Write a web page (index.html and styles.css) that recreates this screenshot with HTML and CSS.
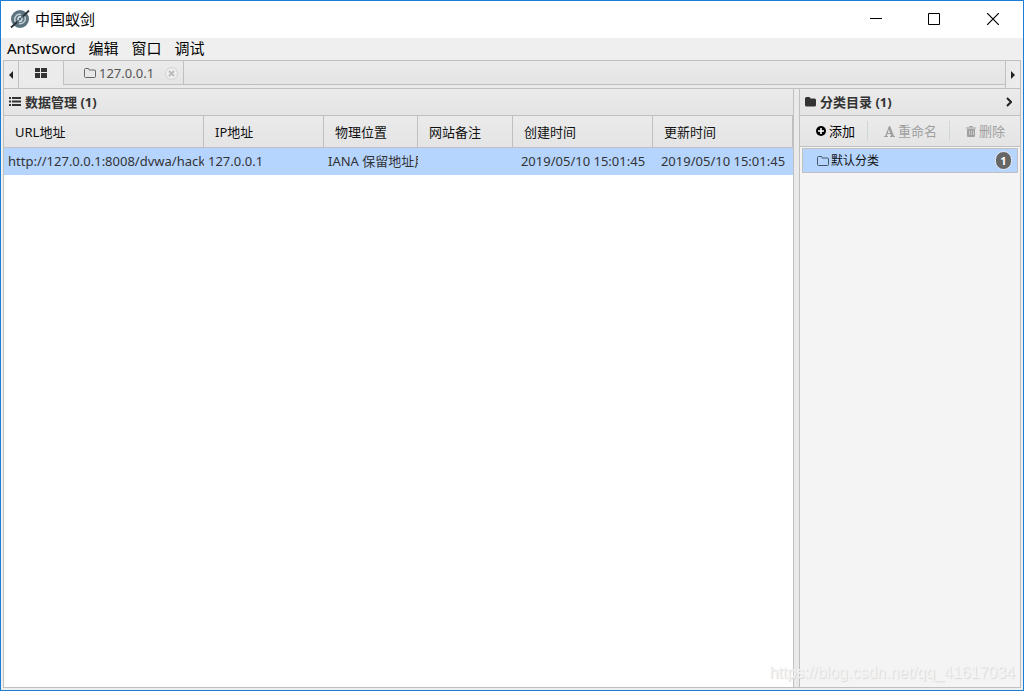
FILE: index.html
```html
<!DOCTYPE html>
<html lang="zh-CN">
<head>
<meta charset="utf-8">
<title>中国蚁剑</title>
<link rel="stylesheet" href="styles.css">
</head>
<body>
<div class="window">
  <header class="titlebar">
    <svg class="logo" width="20" height="20" viewBox="0 0 20 20">
      <circle cx="10" cy="10" r="9" fill="#5d7480"/>
      <path d="M5.500 13A5 5 0 0 1 11 5.500M14.500 7A5 5 0 0 1 9 14.500" fill="none" stroke="#c3d0d6" stroke-width="1.400"/>
      <path d="M8.500 11.500A2.200 2.200 0 0 1 11 8M11.500 8.500A2.200 2.200 0 0 1 9 12" fill="none" stroke="#dbe4e8" stroke-width="1.400"/>
      <path d="M1 18.500L7 13M13 7.500L19 1.500" stroke="#2b3338" stroke-width="1.800"/>
      <path d="M7 13L13 7.500" stroke="#4a5c66"/>
    </svg>
    <h1 class="app-title">中国蚁剑</h1>
    <div class="window-buttons">
      <button class="win-btn" aria-label="最小化"><svg width="12" height="12" viewBox="0 0 12 12"><path d="M0 5.500H12" stroke="#000"/></svg></button>
      <button class="win-btn" aria-label="最大化"><svg width="12" height="12" viewBox="0 0 12 12"><path d="M.5.500H11.500V11.500H.5Z" fill="none" stroke="#000"/></svg></button>
      <button class="win-btn" aria-label="关闭"><svg width="12" height="12" viewBox="0 0 12 12"><path d="M0 0L12 12M12 0L0 12" stroke="#000" stroke-width="1.200"/></svg></button>
    </div>
  </header>
  <nav class="menubar">
    <button class="menu">AntSword</button>
    <button class="menu">编辑</button>
    <button class="menu">窗口</button>
    <button class="menu">调试</button>
  </nav>
  <div class="workspace">
    <div class="tabbar">
      <button class="tab-arrow left" aria-label="向左"><svg width="4" height="8" viewBox="0 0 4 8"><path d="M4 0V8L0 4Z" fill="#222"/></svg></button>
      <div class="tabs">
        <button class="home-tab" aria-label="主页"><svg width="12" height="10" viewBox="0 0 12 10"><path d="M0 0H5V4H0ZM6 0H12V4H6ZM0 5H5V10H0ZM6 5H12V10H6Z" fill="#333"/></svg></button>
        <div class="tab">
          <svg width="12" height="10" viewBox="0 0 12 10"><path d="M.5 1.500Q.5.500 1.500.500H4Q5 .5 5 1.500V2H10.500Q11.500 2 11.500 3V8.500Q11.500 9.500 10.500 9.500H1.500Q.5 9.500 .5 8.500Z" fill="none" stroke="#666"/></svg>
          <span class="tab-name">127.0.0.1</span>
          <button class="tab-close" aria-label="关闭标签"><svg width="13" height="13" viewBox="0 0 13 13"><circle cx="6.500" cy="6.500" r="6" fill="#ededed" stroke="#d2d2d2"/><path d="M4 4L9 9M9 4L4 9" stroke="#bbb" stroke-width="1.800"/></svg></button>
        </div>
      </div>
      <button class="tab-arrow right" aria-label="向右"><svg width="4" height="8" viewBox="0 0 4 8"><path d="M0 0V8L4 4Z" fill="#222"/></svg></button>
    </div>
    <main class="panes">
      <section class="data-pane">
        <h2 class="pane-head">
          <svg width="12" height="9" viewBox="0 0 12 9"><path d="M0 1H2M0 4.500H2M0 8H2M3 1H12M3 4.500H12M3 8H12" stroke="#333" stroke-width="1.800"/></svg>
          <span>数据管理 (1)</span>
        </h2>
        <table class="grid">
          <colgroup><col class="c-url"><col class="c-ip"><col class="c-place"><col class="c-note"><col class="c-time"><col class="c-time"></colgroup>
          <thead><tr><th>URL地址</th><th>IP地址</th><th>物理位置</th><th>网站备注</th><th>创建时间</th><th>更新时间</th></tr></thead>
          <tbody><tr><td>http://127.0.0.1:8008/dvwa/hacka</td><td>127.0.0.1</td><td>IANA 保留地址用</td><td></td><td class="center">2019/05/10 15:01:45</td><td class="center">2019/05/10 15:01:45</td></tr></tbody>
        </table>
      </section>
      <aside class="side-pane">
        <h2 class="pane-head">
          <svg width="11" height="10" viewBox="0 0 11 10"><path d="M0 1.500Q0 0 1.500 0H4Q5.500 0 5.500 1.500H9.500Q11 1.500 11 3V8Q11 9.500 9.500 9.500H1.500Q0 9.500 0 8Z" fill="#333"/></svg>
          <span>分类目录 (1)</span>
          <button class="collapse" aria-label="折叠"><svg width="6" height="10" viewBox="0 0 6 10"><path d="M1 1L5 5L1 9" fill="none" stroke="#222" stroke-width="2"/></svg></button>
        </h2>
        <div class="toolbar">
          <button class="tool"><svg width="10" height="10" viewBox="0 0 10 10"><circle cx="5" cy="5" r="5" fill="#000"/><path d="M5 2V8M2 5H8" stroke="#fff" stroke-width="1.600"/></svg>添加</button>
          <button class="tool" disabled><svg width="11" height="11" viewBox="0 0 11 11"><path d="M5 0H6.200L10 10H11V11H6V10H7L6.400 8H3.400L2.800 10H4V11H0V10H1.200ZM4.900 3.500L3.700 7H6.100Z" fill="#a0a0a0" fill-rule="evenodd"/></svg>重命名</button>
          <button class="tool" disabled><svg width="10" height="11" viewBox="0 0 10 11"><path d="M0 2H10M3.500 1.500V.5H6.500V1.500" fill="none" stroke="#a0a0a0"/><path d="M1 3H9V10Q9 11 8 11H2Q1 11 1 10Z" fill="#a0a0a0"/><path d="M3.500 4.500V9M5.500 4.500V9M7.500 4.500V9" stroke="#ddd" stroke-width=".6"/></svg>删除</button>
        </div>
        <ul class="categories">
          <li class="category">
            <svg width="12" height="10" viewBox="0 0 12 10"><path d="M.5 1.500Q.5.500 1.500.500H4Q5 .5 5 1.500V2H10.500Q11.500 2 11.500 3V8.500Q11.500 9.500 10.500 9.500H1.500Q.5 9.500 .5 8.500Z" fill="none" stroke="#465468"/></svg>
            <span>默认分类</span><span class="count">1</span>
          </li>
        </ul>
      </aside>
    </main>
  </div>
  <div class="watermark">https://blog.csdn.net/qq_41617034</div>
</div>
</body>
</html>
```

FILE: styles.css
```css
* { box-sizing: border-box; }
body {
  margin: 0;
  font: 13px/18px "Noto Sans", "Noto Sans CJK SC", sans-serif;
  color: #333;
}
button { margin: 0; padding: 0; border: 0; background: none; font: inherit; color: inherit; }
svg { display: block; flex: none; }
h1, h2, ul { margin: 0; padding: 0; list-style: none; }

.window {
  position: relative;
  display: flex;
  flex-direction: column;
  min-height: 100vh;
  border: 1px solid #1a7fd4;
  background: #efefef;
}
.titlebar { display: flex; align-items: center; height: 37px; padding: 0 0 2px 9px; background: #fff; }
.app-title { margin-left: 5px; font-size: 15px; font-weight: 400; line-height: 20px; color: #000; }
.window-buttons { display: flex; margin-left: auto; }
.win-btn { display: flex; align-items: center; justify-content: center; width: 58px; height: 34px; }
.win-btn:last-child { width: 60px; }

.menubar { display: flex; gap: 13px; height: 22px; padding: 0 0 2px 6px; }
.menu { font-size: 15px; line-height: 20px; color: #000; }

.workspace {
  display: flex;
  flex: 1;
  flex-direction: column;
  margin: 0 2px 2px;
  border: 1px solid #c0c0c0;
  background: #eaeaea;
}
.tabbar { display: flex; height: 27px; }
.tab-arrow { display: flex; align-items: center; justify-content: center; width: 15px; background: #ebebeb; }
.tab-arrow.left { border-right: 1px solid #c0c0c0; }
.tab-arrow.right { border-left: 1px solid #c0c0c0; }
.tabs { display: flex; flex: 1; height: 24px; border-bottom: 1px solid #c0c0c0; background: linear-gradient(#ebebeb, #e4e4e4); }
.home-tab {
  display: flex;
  align-items: center;
  justify-content: center;
  width: 45px;
  height: 24px;
  border-right: 1px solid #c0c0c0;
  background: #ebebeb;
}
.tab { display: flex; align-items: center; width: 120px; padding: 1px 0 0 20px; border-right: 1px solid #c0c0c0; }
.tab-name { flex: 1; margin-left: 3px; color: #555; }
.tab-close { margin-right: 5px; }

.panes { display: flex; flex: 1; gap: 5px; border-top: 1px solid #c0c0c0; }
.data-pane { flex: 1; min-width: 0; border-right: 1px solid #c0c0c0; background: #fff; }
.side-pane { width: 221px; border-left: 1px solid #c0c0c0; background: #f4f4f4; }
.pane-head {
  display: flex;
  align-items: center;
  gap: 4px;
  height: 27px;
  padding: 0 8px 1px 5px;
  border-bottom: 1px solid #c0c0c0;
  background: linear-gradient(#ebebeb, #e4e4e4);
  font-size: 13px;
}
.collapse { margin-left: auto; }

.grid { width: 100%; table-layout: fixed; border-collapse: separate; border-spacing: 0; }
.c-url { width: 200px; }
.c-ip { width: 120px; }
.c-place { width: 94px; }
.c-note { width: 95px; }
.grid th {
  height: 32px;
  padding: 0 11px;
  border-right: 1px solid #c0c0c0;
  border-bottom: 1px solid #c0c0c0;
  background: linear-gradient(#ebebeb, #e4e4e4);
  color: #111;
  font-weight: 400;
  text-align: left;
}
.grid td {
  height: 27px;
  padding: 0 0 2px 4px;
  overflow: hidden;
  background: #b5d5ff;
  white-space: nowrap;
}
.grid td.center { padding: 0 0 2px; text-align: center; }

.toolbar {
  display: flex;
  height: 31px;
  padding: 5px 0;
  border-bottom: 1px solid #c0c0c0;
  background: linear-gradient(#ebebeb, #e4e4e4);
}
.tool {
  display: flex;
  align-items: center;
  gap: 3px;
  padding: 0 12px 0 16px;
  color: #000;
}
.tool:disabled { color: #a0a0a0; }
.tool + .tool { border-left: 1px solid #cdd6db; }
.categories { padding: 1px 2px; }
.category {
  display: flex;
  align-items: center;
  height: 25px;
  padding: 0 5px 0 14px;
  gap: 2px;
  border: 1px solid #c0c0c0;
  background: #b5d5ff;
  color: #111;
  font-size: 12px;
}
.count {
  width: 17px;
  height: 19px;
  margin-left: auto;
  border: 1px solid #e6eefa;
  border-radius: 9px;
  background: #666;
  color: #fff;
  font-size: 11px;
  font-weight: 700;
  line-height: 17px;
  text-align: center;
}
.watermark {
  position: absolute;
  right: 8px;
  bottom: 7px;
  color: #f4f4f4;
  font: 16px/20px "Liberation Sans", sans-serif;
  text-shadow: 1px 1px 1px #d8d8d8;
}
```
